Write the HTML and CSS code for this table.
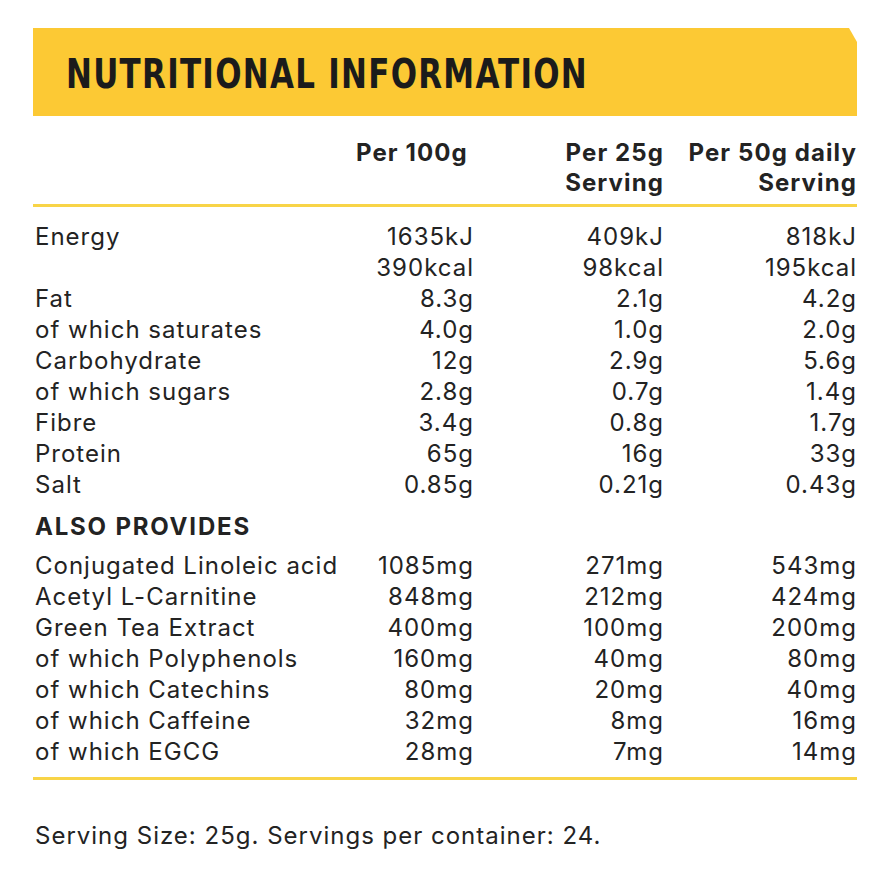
FILE: index.html
```html
<!DOCTYPE html>
<html>
<head>
<meta charset="utf-8">
<link rel="stylesheet" href="styles.css">
</head>
<body>
<div class="page">
  <div class="banner"><h1 class="title">NUTRITIONAL INFORMATION</h1></div>
  <div class="table head">
    <div></div>
    <div class="hc first">Per 100g</div>
    <div class="hc">Per 25g<br>Serving</div>
    <div class="hc">Per 50g daily<br>Serving</div>
  </div>
  <div class="rule"></div>
  <div class="table body">
    <div class="lb">Energy</div><div class="v">1635kJ</div><div class="v">409kJ</div><div class="v">818kJ</div>
    <div class="lb"></div><div class="v">390kcal</div><div class="v">98kcal</div><div class="v">195kcal</div>
    <div class="lb">Fat</div><div class="v">8.3g</div><div class="v">2.1g</div><div class="v">4.2g</div>
    <div class="lb">of which saturates</div><div class="v">4.0g</div><div class="v">1.0g</div><div class="v">2.0g</div>
    <div class="lb">Carbohydrate</div><div class="v">12g</div><div class="v">2.9g</div><div class="v">5.6g</div>
    <div class="lb">of which sugars</div><div class="v">2.8g</div><div class="v">0.7g</div><div class="v">1.4g</div>
    <div class="lb">Fibre</div><div class="v">3.4g</div><div class="v">0.8g</div><div class="v">1.7g</div>
    <div class="lb">Protein</div><div class="v">65g</div><div class="v">16g</div><div class="v">33g</div>
    <div class="lb">Salt</div><div class="v">0.85g</div><div class="v">0.21g</div><div class="v">0.43g</div>
    <div class="section">ALSO PROVIDES</div>
    <div class="lb">Conjugated Linoleic acid</div><div class="v">1085mg</div><div class="v">271mg</div><div class="v">543mg</div>
    <div class="lb">Acetyl L-Carnitine</div><div class="v">848mg</div><div class="v">212mg</div><div class="v">424mg</div>
    <div class="lb">Green Tea Extract</div><div class="v">400mg</div><div class="v">100mg</div><div class="v">200mg</div>
    <div class="lb">of which Polyphenols</div><div class="v">160mg</div><div class="v">40mg</div><div class="v">80mg</div>
    <div class="lb">of which Catechins</div><div class="v">80mg</div><div class="v">20mg</div><div class="v">40mg</div>
    <div class="lb">of which Caffeine</div><div class="v">32mg</div><div class="v">8mg</div><div class="v">16mg</div>
    <div class="lb">of which EGCG</div><div class="v">28mg</div><div class="v">7mg</div><div class="v">14mg</div>
  </div>
  <div class="rule bottom"></div>
  <p class="note">Serving Size: 25g. Servings per container: 24.</p>
</div>
</body>
</html>
```
FILE: styles.css
```css
html, body {
  margin: 0;
  padding: 0;
  background: #ffffff;
}
.page {
  width: 824px;
  padding: 28px 0 0 33px;
  font-family: "Inter", "Liberation Sans", sans-serif;
  color: #232323;
}
.banner {
  height: 88px;
  background: #fcc934;
  clip-path: polygon(0 0, calc(100% - 8px) 0, 100% 14px, 100% 100%, 0 100%);
  display: flex;
  align-items: center;
  padding-left: 33px;
}
.title {
  margin: 0;
  font-family: "DejaVu Sans Condensed", sans-serif;
  font-weight: 700;
  font-size: 40px;
  letter-spacing: 1.5px;
  color: #1b1b1b;
  padding-top: 4px;
  transform: scaleX(0.86);
  transform-origin: left center;
  white-space: nowrap;
}
.table {
  display: grid;
  grid-template-columns: 320px 121px 190px 193px;
}
.head {
  padding-top: 22px;
  padding-bottom: 6px;
  font-weight: 700;
  font-size: 24px;
  line-height: 30px;
  letter-spacing: 1.1px;
}
.hc {
  text-align: right;
}
.hc.first {
  text-align: left;
  padding-left: 3px;
}
.rule {
  height: 3px;
  background: #f8d447;
}
.body {
  padding-top: 14px;
  padding-bottom: 10px;
  font-size: 24px;
  line-height: 31px;
  letter-spacing: 1px;
}
.lb {
  padding-left: 2px;
  white-space: nowrap;
}
.v {
  text-align: right;
}
.section {
  grid-column: 1 / -1;
  font-weight: 700;
  padding-left: 2px;
  margin-top: 11px;
  margin-bottom: 8px;
  letter-spacing: 1.8px;
}
.note {
  margin: 40px 0 0 2px;
  font-size: 24px;
  line-height: 31px;
  letter-spacing: 1px;
}
```
